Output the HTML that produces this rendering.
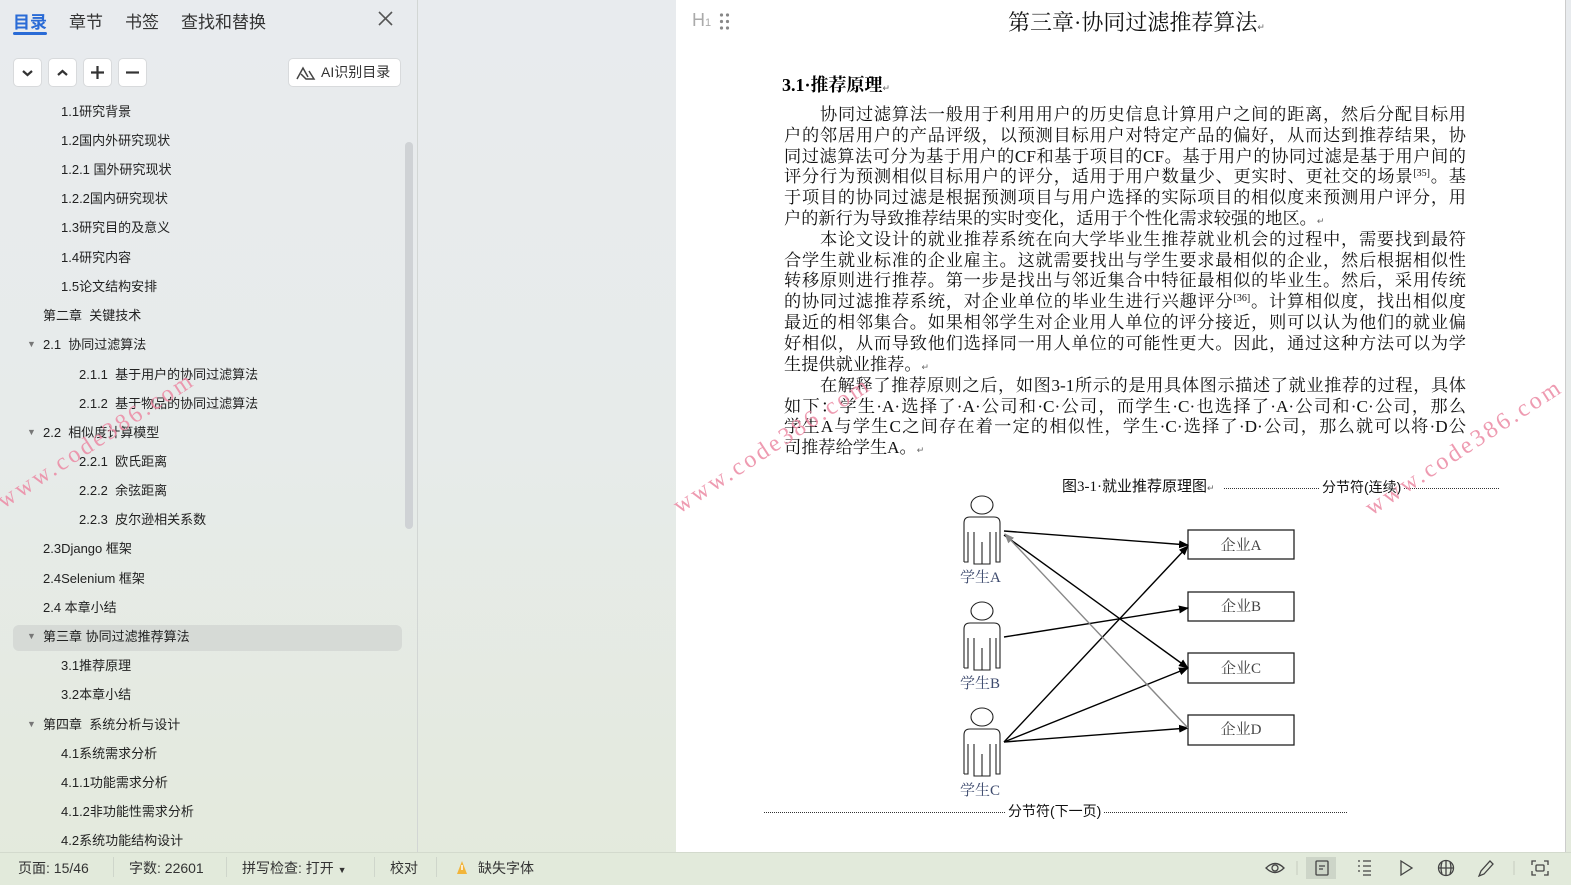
<!DOCTYPE html>
<html><head><meta charset="utf-8">
<style>
*{margin:0;padding:0;box-sizing:border-box}
body{width:1571px;height:885px;overflow:hidden;position:relative;font-family:"Liberation Sans","Noto Sans CJK SC",sans-serif;background:linear-gradient(180deg,#e8ebee 0%,#e7ebea 50%,#e3eadc 100%)}
.abs{position:absolute}
.tab{position:absolute;top:8px;font-size:17px;color:#333}
.btn{position:absolute;top:58px;width:29px;height:29px;background:#fff;border:1px solid #d8dadc;border-radius:5px}
.toc{position:absolute;font-size:13px;color:#222;white-space:nowrap;line-height:16px}
.tri{position:absolute;left:27px;font-size:9px;color:#777}
.page{position:absolute;left:676px;top:0;width:890px;height:852px;background:#fff;border-right:1px solid #ccc}
.ln{position:absolute;left:108px;width:682px;font-family:"Liberation Serif","Noto Serif CJK SC",serif;font-size:17.2px;line-height:21px;height:21px;text-align:justify;text-align-last:justify;color:#111;white-space:nowrap;letter-spacing:0}
.ln.last{text-align-last:left}
.sup{font-size:10px;position:relative;top:-6px;line-height:0}
.wm{position:absolute;font-family:"Liberation Serif",serif;font-size:24px;color:#ec8aa4;letter-spacing:3px;transform-origin:left center;white-space:nowrap;opacity:.85}
.st{position:absolute;top:858px;font-size:14px;color:#333}
.sep{position:absolute;top:857px;width:1px;height:20px;background:#cfd6cb}
</style></head><body>
<div class="tab" style="left:13px;color:#2a6bd6;font-weight:bold">目录</div>
<div class="abs" style="left:13px;top:32px;width:34px;height:3px;background:#2a6bd6;border-radius:2px"></div>
<div class="tab" style="left:69px">章节</div>
<div class="tab" style="left:125px">书签</div>
<div class="tab" style="left:181px">查找和替换</div>
<svg class="abs" style="left:378px;top:11px" width="15" height="15"><path d="M1 1L14 14M14 1L1 14" stroke="#555" stroke-width="1.6"/></svg>

<div class="btn" style="left:13px"><svg width="27" height="27"><path d="M9 12l4.5 4 4.5-4" stroke="#333" stroke-width="2.2" fill="none"/></svg></div>
<div class="btn" style="left:48px"><svg width="27" height="27"><path d="M9 16l4.5-4 4.5 4" stroke="#333" stroke-width="2.2" fill="none"/></svg></div>
<div class="btn" style="left:83px"><svg width="27" height="27"><path d="M13.5 7v13M7 13.5h13" stroke="#333" stroke-width="2.2"/></svg></div>
<div class="btn" style="left:118px"><svg width="27" height="27"><path d="M7 13.5h13" stroke="#333" stroke-width="2.2"/></svg></div>
<div class="abs" style="left:288px;top:58px;width:113px;height:29px;background:#fff;border:1px solid #d8dadc;border-radius:5px;font-size:14px;color:#333;line-height:27px;padding-left:32px">AI识别目录
<svg class="abs" style="left:6px;top:6px" width="22" height="16"><path d="M2 14L8 3l5 9M6 9l5 5h8L14 6" stroke="#444" stroke-width="1.5" fill="none"/></svg></div>

<div class="toc" style="left:61px;top:104px">1.1研究背景</div>
<div class="toc" style="left:61px;top:133px">1.2国内外研究现状</div>
<div class="toc" style="left:61px;top:162px">1.2.1 国外研究现状</div>
<div class="toc" style="left:61px;top:191px">1.2.2国内研究现状</div>
<div class="toc" style="left:61px;top:220px">1.3研究目的及意义</div>
<div class="toc" style="left:61px;top:250px">1.4研究内容</div>
<div class="toc" style="left:61px;top:279px">1.5论文结构安排</div>
<div class="toc" style="left:43px;top:308px">第二章&nbsp; 关键技术</div>
<div class="tri" style="top:339px">▼</div><div class="toc" style="left:43px;top:337px">2.1&nbsp; 协同过滤算法</div>
<div class="toc" style="left:79px;top:367px">2.1.1&nbsp; 基于用户的协同过滤算法</div>
<div class="toc" style="left:79px;top:396px">2.1.2&nbsp; 基于物品的协同过滤算法</div>
<div class="tri" style="top:427px">▼</div><div class="toc" style="left:43px;top:425px">2.2&nbsp; 相似度计算模型</div>
<div class="toc" style="left:79px;top:454px">2.2.1&nbsp; 欧氏距离</div>
<div class="toc" style="left:79px;top:483px">2.2.2&nbsp; 余弦距离</div>
<div class="toc" style="left:79px;top:512px">2.2.3&nbsp; 皮尔逊相关系数</div>
<div class="toc" style="left:43px;top:541px">2.3Django 框架</div>
<div class="toc" style="left:43px;top:571px">2.4Selenium 框架</div>
<div class="toc" style="left:43px;top:600px">2.4 本章小结</div>
<div class="abs" style="left:13px;top:625px;width:389px;height:26px;background:#d6dad6;border-radius:6px"></div>
<div class="tri" style="top:631px">▼</div><div class="toc" style="left:43px;top:629px">第三章 协同过滤推荐算法</div>
<div class="toc" style="left:61px;top:658px">3.1推荐原理</div>
<div class="toc" style="left:61px;top:687px">3.2本章小结</div>
<div class="tri" style="top:719px">▼</div><div class="toc" style="left:43px;top:717px">第四章&nbsp; 系统分析与设计</div>
<div class="toc" style="left:61px;top:746px">4.1系统需求分析</div>
<div class="toc" style="left:61px;top:775px">4.1.1功能需求分析</div>
<div class="toc" style="left:61px;top:804px">4.1.2非功能性需求分析</div>
<div class="toc" style="left:61px;top:833px">4.2系统功能结构设计</div>
<div class="abs" style="left:405px;top:142px;width:8px;height:387px;background:#cfd2d5;border-radius:4px"></div>
<div class="abs" style="left:417px;top:0;width:1px;height:852px;background:#d2d6d4"></div>

<div class="page">
 <div class="abs" style="left:16px;top:10px;font-size:18px;color:#aaa;font-family:'Liberation Sans',sans-serif">H<span style="font-size:11px">1</span></div>
 <svg class="abs" style="left:43px;top:13px" width="12" height="18"><g fill="#888"><circle cx="2.5" cy="2" r="1.6"/><circle cx="8.5" cy="2" r="1.6"/><circle cx="2.5" cy="8.5" r="1.6"/><circle cx="8.5" cy="8.5" r="1.6"/><circle cx="2.5" cy="15" r="1.6"/><circle cx="8.5" cy="15" r="1.6"/></g></svg>
 <div class="abs" style="left:332px;top:6px;font-family:'Liberation Serif','Noto Serif CJK SC',serif;font-size:22px;color:#111">第三章·协同过滤推荐算法<span style="font-size:9px;color:#666">↵</span></div>
 <div class="abs" style="left:106px;top:71px;font-family:'Liberation Serif','Noto Serif CJK SC',serif;font-size:18px;font-weight:bold;color:#000">3.1·推荐原理<span style="font-size:9px;font-weight:normal;color:#666">↵</span></div>

 <div class="ln" style="top:104px;left:144px;width:646px">协同过滤算法一般用于利用用户的历史信息计算用户之间的距离，然后分配目标用</div>
 <div class="ln" style="top:125px">户的邻居用户的产品评级，以预测目标用户对特定产品的偏好，从而达到推荐结果，协</div>
 <div class="ln" style="top:146px">同过滤算法可分为基于用户的CF和基于项目的CF。基于用户的协同过滤是基于用户间的</div>
 <div class="ln" style="top:166px">评分行为预测相似目标用户的评分，适用于用户数量少、更实时、更社交的场景<span class="sup">[35]</span>。基</div>
 <div class="ln" style="top:187px">于项目的协同过滤是根据预测项目与用户选择的实际项目的相似度来预测用户评分，用</div>
 <div class="ln last" style="top:208px">户的新行为导致推荐结果的实时变化，适用于个性化需求较强的地区。<span style="font-size:9px;color:#666">↵</span></div>
 <div class="ln" style="top:229px;left:144px;width:646px">本论文设计的就业推荐系统在向大学毕业生推荐就业机会的过程中，需要找到最符</div>
 <div class="ln" style="top:250px">合学生就业标准的企业雇主。这就需要找出与学生要求最相似的企业，然后根据相似性</div>
 <div class="ln" style="top:270px">转移原则进行推荐。第一步是找出与邻近集合中特征最相似的毕业生。然后，采用传统</div>
 <div class="ln" style="top:291px">的协同过滤推荐系统，对企业单位的毕业生进行兴趣评分<span class="sup">[36]</span>。计算相似度，找出相似度</div>
 <div class="ln" style="top:312px">最近的相邻集合。如果相邻学生对企业用人单位的评分接近，则可以认为他们的就业偏</div>
 <div class="ln" style="top:333px">好相似，从而导致他们选择同一用人单位的可能性更大。因此，通过这种方法可以为学</div>
 <div class="ln last" style="top:354px">生提供就业推荐。<span style="font-size:9px;color:#666">↵</span></div>
 <div class="ln" style="top:375px;left:144px;width:646px">在解释了推荐原则之后，如图3-1所示的是用具体图示描述了就业推荐的过程，具体</div>
 <div class="ln" style="top:396px">如下：学生·A·选择了·A·公司和·C·公司，而学生·C·也选择了·A·公司和·C·公司，那么</div>
 <div class="ln" style="top:416px">学生A与学生C之间存在着一定的相似性，学生·C·选择了·D·公司，那么就可以将·D公</div>
 <div class="ln last" style="top:437px">司推荐给学生A。<span style="font-size:9px;color:#666">↵</span></div>

 <div class="abs" style="left:386px;top:475px;font-size:15px;color:#111;font-family:'Liberation Serif','Noto Sans CJK SC',serif">图3-1·就业推荐原理图<span style="font-size:9px;color:#666">↵</span></div>
 <div class="abs" style="left:548px;top:488px;width:275px;border-top:1px dotted #333"></div>
 <div class="abs" style="left:644px;top:477px;font-size:14px;color:#111;background:#fff;padding:0 2px">分节符(连续)</div>

 <div class="abs" style="left:88px;top:812px;width:583px;border-top:1px dotted #333"></div>
 <div class="abs" style="left:330px;top:801px;font-size:14px;color:#111;background:#fff;padding:0 2px">分节符(下一页)</div>
</div>

<svg class="abs" style="left:942px;top:490px" width="380" height="320" font-family="Liberation Serif,Noto Serif CJK SC,serif">
 <defs><marker id="ar" markerWidth="10" markerHeight="8" refX="9" refY="4" orient="auto" markerUnits="userSpaceOnUse"><path d="M0 0L10 4L0 8z" fill="#000"/></marker>
 <marker id="ag" markerWidth="10" markerHeight="8" refX="9" refY="4" orient="auto" markerUnits="userSpaceOnUse"><path d="M0 0L10 4L0 8z" fill="#888"/></marker></defs>
 <g id="p" fill="#fff" stroke="#222" stroke-width="1.1">
  <ellipse cx="40" cy="15" rx="11" ry="9"/>
  <path d="M22 72V33q0-6 6-6h24q6 0 6 6v39h-4V42M26 42v30h-4M32 42v32h16V42M40 52v22"/>
 </g>
 <use href="#p" y="106"/><use href="#p" y="212"/>
 <g font-size="15" fill="#3d4a6d"><text x="18" y="92">学生A</text><text x="18" y="198">学生B</text><text x="18" y="305">学生C</text></g>
 <g fill="#fff" stroke="#222" stroke-width="1.3"><rect x="246" y="40" width="106" height="29"/><rect x="246" y="102" width="106" height="29"/><rect x="246" y="163" width="106" height="30"/><rect x="246" y="225" width="106" height="30"/></g>
 <g font-size="15" fill="#444" text-anchor="middle"><text x="299" y="60">企业A</text><text x="299" y="121">企业B</text><text x="299" y="183">企业C</text><text x="299" y="244">企业D</text></g>
 <g stroke="#000" stroke-width="1.4" marker-end="url(#ar)">
  <line x1="62" y1="41" x2="246" y2="55"/>
  <line x1="62" y1="45" x2="246" y2="178"/>
  <line x1="62" y1="147" x2="246" y2="118"/>
  <line x1="62" y1="252" x2="246" y2="56"/>
  <line x1="62" y1="252" x2="246" y2="178"/>
  <line x1="62" y1="252" x2="246" y2="238"/>
 </g>
 <line x1="246" y1="238" x2="63" y2="44" stroke="#888" stroke-width="1.4" marker-end="url(#ag)"/>
</svg>

<div class="wm" style="left:0;top:490px;transform:rotate(-33deg)">www.code386.com</div>
<div class="wm" style="left:676px;top:495px;transform:rotate(-33deg)">www.code386.com</div>
<div class="wm" style="left:1368px;top:497px;transform:rotate(-33deg)">www.code386.com</div>

<div class="abs" style="left:0;top:852px;width:1571px;height:33px;background:#e2eadb;border-top:1px solid #d3dacd"></div>
<div class="st" style="left:18px">页面: 15/46</div>
<div class="sep" style="left:113px"></div>
<div class="st" style="left:129px">字数: 22601</div>
<div class="sep" style="left:226px"></div>
<div class="st" style="left:242px">拼写检查: 打开 <span style="font-size:9px">▼</span></div>
<div class="sep" style="left:374px"></div>
<div class="st" style="left:390px">校对</div>
<div class="sep" style="left:436px"></div>
<svg class="abs" style="left:456px;top:860px" width="12" height="15"><path d="M6 1L11 14H1z" fill="#f2b53a"/><path d="M6 5v5" stroke="#fff" stroke-width="1.5"/></svg>
<div class="st" style="left:478px">缺失字体</div>
<svg class="abs" style="left:1264px;top:857px" width="300" height="22" fill="none" stroke="#444" stroke-width="1.3">
 <path d="M2 11q9-9 18 0q-9 9-18 0z"/><circle cx="11" cy="11" r="3"/>
 <path d="M33 4v14" stroke="#ccd3c6"/>
 <rect x="42" y="-3" width="30" height="28" fill="#cdd5c8" stroke="none" rx="3"/>
 <rect x="52" y="4" width="12" height="14" rx="1"/><path d="M55 9h6M55 12h4"/>
 <path d="M94 4h2M94 9h2M94 14h2M99 4h8M99 9h8M99 14h8M99 18h8"/>
 <path d="M137 4l11 7l-11 7z"/>
 <circle cx="182" cy="11" r="7.5"/><path d="M174.5 11h15M182 3.5v15M178 5q-2 6 0 12M186 5q2 6 0 12"/>
 <path d="M215 19l2-5 9-10 3 3-9 10z"/>
 <path d="M250 4v14" stroke="#ccd3c6"/>
 <path d="M268 8V4h4M280 4h4v4M284 14v4h-4M272 18h-4v-4"/><rect x="272" y="8" width="8" height="6" rx="1"/>
</svg>
</body></html>
